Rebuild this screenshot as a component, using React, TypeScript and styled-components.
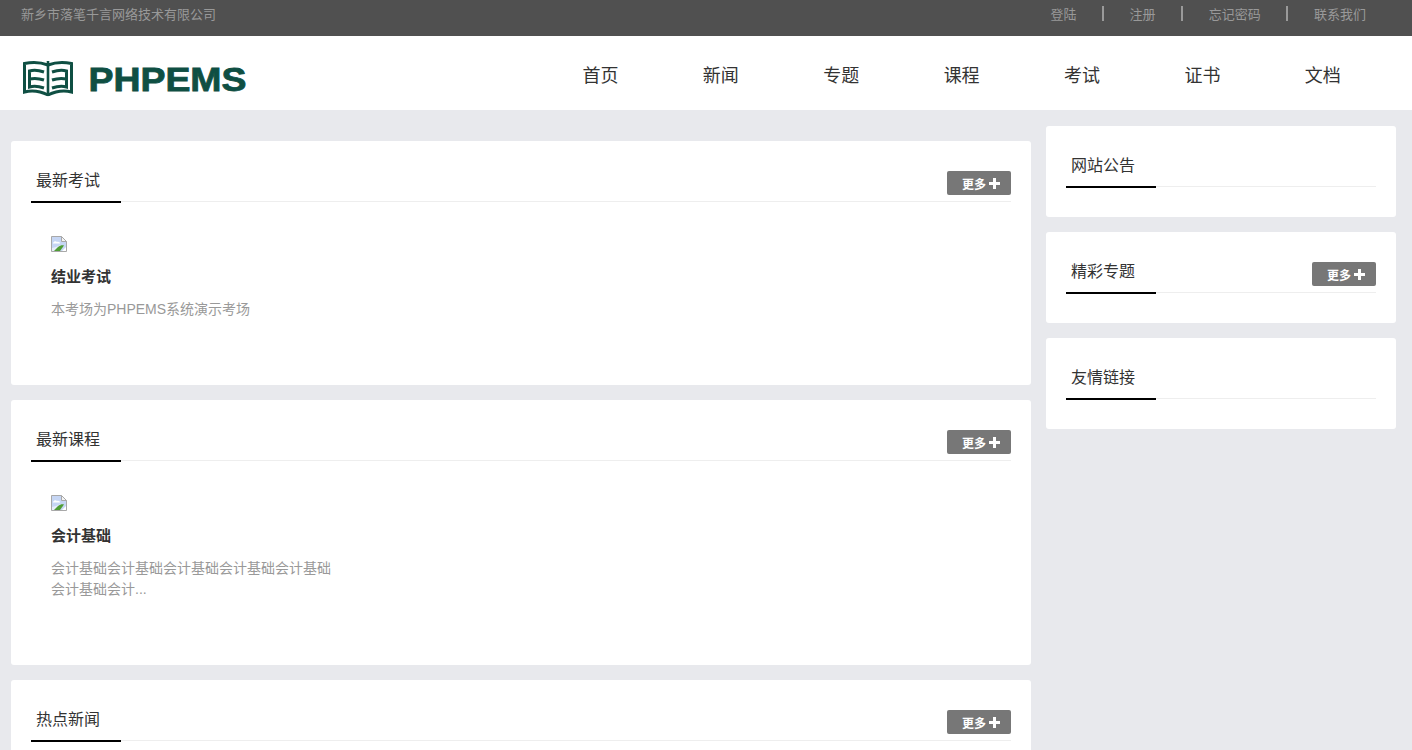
import React from "react";
import styled, { createGlobalStyle } from "styled-components";

const GlobalStyle = createGlobalStyle`
  html, body {
    margin: 0;
    padding: 0;
    height: 100%;
    overflow: hidden;
    background: #e8e9ed;
    font-family: "Liberation Sans", "Noto Sans CJK SC", sans-serif;
    color: #333;
  }
`;

const topLinks = ["登陆", "注册", "忘记密码", "联系我们"];
const navItems = ["首页", "新闻", "专题", "课程", "考试", "证书", "文档"];

const Logo = () => (
  <LogoMark width="228" height="40" viewBox="0 0 228 40" aria-label="PHPEMS">
    <g fill="none" stroke="#0f4f43" strokeWidth="3">
      <path d="M28 8C20 5 12 5 4.500 6.500V35C12 33 20 34 28 38" />
      <path d="M28 8C36 5 44 5 51.500 6.500V35C44 33 36 34 28 38" />
      <path d="M28 4V39" strokeWidth="2.6" />
      <path d="M24 15C18 13 13 13 9.500 14V30C13 29 18 29 24 31M9.500 22C14 21 18 21 24 23" />
      <path d="M32 15C38 13 43 13 46.500 14V30C43 29 38 29 32 31M46.500 22C42 21 38 21 32 23" />
    </g>
    <text
      x="68.500"
      y="33.500"
      fill="#0f4f43"
      stroke="#0f4f43"
      strokeWidth="0.8"
      fontFamily="Liberation Sans, sans-serif"
      fontWeight="700"
      fontSize="32.500"
      textLength="158"
      lengthAdjust="spacingAndGlyphs"
    >
      PHPEMS
    </text>
  </LogoMark>
);

const BrokenImage = () => (
  <BrokenIcon width="16" height="16" viewBox="0 0 16 16">
    <path d="M.5.500h10l5 5v10H.5z" fill="#c6d6f4" stroke="#a8a8a8" />
    <path d="M10.500.500v5h5z" fill="#f4f4f4" stroke="#a8a8a8" />
    <path d="M2 7c1-2 3-2 4-1 2-.5 3 .5 3 1.500H2z" fill="#fff" />
    <path d="M1 15v-3l4-1 5-2-5 6z" fill="#e8eefb" />
    <path d="M3 15l4-4c2-1.500 4-2 6-1.500L9 15z" fill="#4f9d35" />
    <path d="M11 15l4-4v4z" fill="#fff" />
  </BrokenIcon>
);

const More = () => (
  <MoreButton>
    更多
    <svg width="11" height="11" viewBox="0 0 11 11">
      <path d="M4 0h3v4h4v3H7v4H4V7H0V4h4z" fill="#fff" />
    </svg>
  </MoreButton>
);

const Panel = ({
  title,
  more,
  children,
}: {
  title: string;
  more?: boolean;
  children?: React.ReactNode;
}) => (
  <Card>
    <CardHead>
      <CardTitle>{title}</CardTitle>
      {more && <More />}
    </CardHead>
    {children}
  </Card>
);

const App = () => (
  <>
    <GlobalStyle />
    <TopBar>
      <Company>新乡市落笔千言网络技术有限公司</Company>
      <TopLinks>
        {topLinks.map((link, i) => (
          <React.Fragment key={link}>
            {i > 0 && <Separator />}
            <TopLink>{link}</TopLink>
          </React.Fragment>
        ))}
      </TopLinks>
    </TopBar>
    <Header>
      <Logo />
      <Nav>
        {navItems.map((item) => (
          <NavItem key={item}>{item}</NavItem>
        ))}
      </Nav>
    </Header>
    <Page>
      <MainColumn>
        <Panel title="最新考试" more>
          <Item>
            <BrokenImage />
            <ItemTitle>结业考试</ItemTitle>
            <ItemText>本考场为PHPEMS系统演示考场</ItemText>
          </Item>
        </Panel>
        <Panel title="最新课程" more>
          <Item>
            <BrokenImage />
            <ItemTitle>会计基础</ItemTitle>
            <ItemText>会计基础会计基础会计基础会计基础会计基础会计基础会计...</ItemText>
          </Item>
        </Panel>
        <Panel title="热点新闻" more />
      </MainColumn>
      <SideColumn>
        <Panel title="网站公告" />
        <Panel title="精彩专题" more />
        <Panel title="友情链接" />
      </SideColumn>
    </Page>
  </>
);

const TopBar = styled.div`
  display: flex;
  justify-content: space-between;
  height: 36px;
  padding: 0 46px 0 21px;
  background: #505050;
  color: #999;
  font-size: 13px;
  line-height: 29px;
`;
const Company = styled.div``;
const TopLinks = styled.div`
  display: flex;
  align-items: flex-start;
  gap: 25.6px;
`;
const TopLink = styled.span``;
const Separator = styled.i`
  width: 2px;
  height: 15px;
  margin-top: 6px;
  background: #9a9a9a;
`;
const Header = styled.div`
  display: flex;
  align-items: center;
  justify-content: space-between;
  height: 74px;
  padding: 0 29px 0 20px;
  background: #fff;
`;
const LogoMark = styled.svg`
  margin-top: 8px;
`;
const Nav = styled.nav`
  display: grid;
  grid-template-columns: repeat(7, 120.4px);
  padding-top: 2px;
`;
const NavItem = styled.a`
  font-size: 18px;
  text-align: center;
  color: #333;
`;
const Page = styled.div`
  display: flex;
  gap: 15px;
  align-items: flex-start;
  padding: 16px 16px 0 11px;
`;
const MainColumn = styled.div`
  display: flex;
  flex-direction: column;
  gap: 15px;
  width: 1020px;
  margin-top: 15px;
`;
const SideColumn = styled.div`
  display: flex;
  flex-direction: column;
  gap: 15px;
  width: 350px;
`;
const Card = styled.section`
  padding: 0 20px 30px;
  background: #fff;
  border-radius: 3px;
`;
const CardHead = styled.div`
  display: flex;
  align-items: flex-start;
  justify-content: space-between;
  height: 60px;
  border-bottom: 1px solid #eee;
`;
const CardTitle = styled.h3`
  width: 85px;
  height: 60px;
  margin: 0;
  padding-left: 5px;
  border-bottom: 2px solid #000;
  font-size: 16px;
  font-weight: 400;
  line-height: 80px;
  color: #333;
`;
const MoreButton = styled.span`
  display: flex;
  align-items: center;
  justify-content: center;
  gap: 3px;
  box-sizing: border-box;
  width: 64px;
  height: 24px;
  margin-top: 30px;
  padding-left: 4px;
  background: #777;
  border-radius: 2px;
  color: #fff;
  font-size: 12px;
  font-weight: 700;
`;
const Item = styled.div`
  width: 280px;
  padding: 34px 20px 35px;
`;
const BrokenIcon = styled.svg`
  display: block;
`;
const ItemTitle = styled.div`
  margin-top: 13px;
  font-size: 15px;
  font-weight: 700;
  line-height: 24px;
  color: #333;
`;
const ItemText = styled.div`
  margin-top: 10px;
  font-size: 14px;
  line-height: 21px;
  color: #999;
  word-break: break-all;
`;

export default App;
